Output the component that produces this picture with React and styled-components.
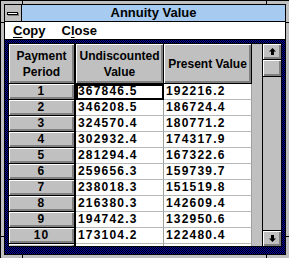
import React from 'react';
import styled, { createGlobalStyle } from 'styled-components';

const GlobalStyle = createGlobalStyle`
  html, body {
    margin: 0;
    padding: 0;
    background: #c0c0c0;
    overflow: hidden;
  }
  body {
    font-family: "Liberation Sans", Arial, sans-serif;
    color: #000;
  }
`;

// the 11th row is only a sliver at the bottom edge, so it stays empty
const rows = [
  [1, '367846.5', '192216.2'],
  [2, '346208.5', '186724.4'],
  [3, '324570.4', '180771.2'],
  [4, '302932.4', '174317.9'],
  [5, '281294.4', '167322.6'],
  [6, '259656.3', '159739.7'],
  [7, '238018.3', '151519.8'],
  [8, '216380.3', '142609.4'],
  [9, '194742.3', '132950.6'],
  [10, '173104.2', '122480.4'],
  ['', '', ''],
];

const raised = `
  box-shadow: inset 1px 1px #fff, inset -1px -1px #808080, inset -2px -2px #808080;
`;

const Window = styled.div`
  position: relative;
  width: 290px;
  height: 259px;
  box-sizing: border-box;
  border: 1px solid #000;
  background: #c0c0c0;
  padding: 3px;
`;

const Tick = styled.span`
  position: absolute;
  background: #000;
  ${p => (p.$v ? 'width: 1px; height: 4px;' : 'width: 4px; height: 1px;')}
`;

const Frame = styled.div`
  height: 100%;
  box-sizing: border-box;
  border: 1px solid #000;
  display: flex;
  flex-direction: column;
`;

const TitleBar = styled.div`
  display: flex;
  height: 16px;
  border-bottom: 1px solid #000;
  background: #a6caf0;
`;

const SysMenu = styled.div`
  width: 16px;
  border-right: 1px solid #000;
  background: #c0c0c0;
  display: flex;
  align-items: center;
  justify-content: center;
`;

const SysDash = styled.div`
  width: 11px;
  height: 3px;
  background: #fff;
  border: 1px solid #000;
  box-shadow: 1px 1px #808080;
  box-sizing: border-box;
  margin-left: -1px;
`;

const Title = styled.div`
  flex: 1;
  text-align: center;
  font-weight: bold;
  font-size: 13px;
  line-height: 16px;
`;

const MenuBar = styled.div`
  display: flex;
  height: 17px;
  border-bottom: 1px solid #000;
  background: #fff;
`;

const MenuItem = styled.div`
  padding: 0 8px;
  font-weight: bold;
  font-size: 13px;
  line-height: 17px;
  u {
    text-decoration-thickness: 1px;
    text-underline-offset: 2px;
  }
`;

const Client = styled.div`
  flex: 1;
  padding: 3px;
  background-color: #0000a8;
  background-image: conic-gradient(#000 25%, transparent 0 50%, #000 0 75%, transparent 0);
  background-size: 2px 2px;
`;

const GridBox = styled.div`
  display: flex;
  height: 204px;
  box-sizing: border-box;
  border: 1px solid #000;
  background: #c0c0c0;
  overflow: hidden;
`;

const Table = styled.div`
  flex: 1;
  display: grid;
  grid-template-columns: 67px 88px 88px;
  grid-template-rows: 40px;
  grid-auto-rows: 16px;
  align-content: start;
  overflow: hidden;
`;

const HeadCell = styled.div`
  box-sizing: border-box;
  border-right: ${p => (p.$corner ? 2 : 1)}px solid #000;
  border-bottom: 1px solid #000;
  background: #c0c0c0;
  ${raised}
  display: flex;
  align-items: center;
  justify-content: center;
  text-align: center;
  font-weight: bold;
  font-size: 12px;
  line-height: 16px;
`;

const RowHead = styled.div`
  box-sizing: border-box;
  border-right: 2px solid #000;
  border-bottom: 1px solid #000;
  background: #c0c0c0;
  ${raised}
  text-align: center;
  font-weight: bold;
  font-size: 12px;
  letter-spacing: 1.2px;
  line-height: 15px;
`;

const Cell = styled.div`
  box-sizing: border-box;
  border-right: 1px solid #a0a0a0;
  border-bottom: 1px solid #b8b8b8;
  background: #fff;
  padding-left: 2px;
  font-weight: bold;
  font-size: 12px;
  letter-spacing: 1.2px;
  line-height: 15px;
  white-space: nowrap;
  overflow: hidden;
  ${p => p.$focus && 'outline: 2px solid #000; outline-offset: -2px;'}
`;

const ScrollBar = styled.div`
  width: 18px;
  border-left: 1px solid #000;
  display: flex;
  flex-direction: column;
  background: #c0c0c0;
`;

const ScrollButton = styled.div`
  height: 16px;
  box-sizing: border-box;
  ${p => (p.$bottom ? 'border-top: 1px solid #000; margin-top: auto;' : 'border-bottom: 1px solid #000;')}
  background: #c0c0c0;
  ${raised}
  display: flex;
  align-items: center;
  justify-content: center;
`;

const Thumb = styled.div`
  height: 17px;
  box-sizing: border-box;
  border-bottom: 1px solid #000;
  background: #c0c0c0;
  ${raised}
`;

function Arrow({ down }) {
  return (
    <svg width="7" height="7" viewBox="0 0 7 7" style={{ transform: down ? 'rotate(180deg)' : undefined }}>
      <path d="M3.5 0 L7 3.5 L5 3.5 L5 7 L2 7 L2 3.5 L0 3.5 Z" fill="#000" />
    </svg>
  );
}

export default function App() {
  return (
    <>
      <GlobalStyle />
      <Window>
        <Tick $v style={{ left: 21, top: 0 }} />
        <Tick $v style={{ left: 265, top: 0 }} />
        <Tick $v style={{ left: 21, bottom: 0 }} />
        <Tick $v style={{ left: 265, bottom: 0 }} />
        <Tick style={{ left: 0, top: 21 }} />
        <Tick style={{ right: 0, top: 21 }} />
        <Tick style={{ left: 0, bottom: 21 }} />
        <Tick style={{ right: 0, bottom: 21 }} />
        <Frame>
          <TitleBar>
            <SysMenu><SysDash /></SysMenu>
            <Title>Annuity Value</Title>
          </TitleBar>
          <MenuBar>
            <MenuItem><u>C</u>opy</MenuItem>
            <MenuItem>C<u>l</u>ose</MenuItem>
          </MenuBar>
          <Client>
            <GridBox>
              <Table>
                <HeadCell $corner>Payment<br />Period</HeadCell>
                <HeadCell>Undiscounted<br />Value</HeadCell>
                <HeadCell>Present Value</HeadCell>
                {rows.map(([n, u, p], i) => (
                  <React.Fragment key={i}>
                    <RowHead>{n}</RowHead>
                    <Cell $focus={n === 1}>{u}</Cell>
                    <Cell>{p}</Cell>
                  </React.Fragment>
                ))}
              </Table>
              <ScrollBar>
                <ScrollButton><Arrow /></ScrollButton>
                <Thumb />
                <ScrollButton $bottom><Arrow down /></ScrollButton>
              </ScrollBar>
            </GridBox>
          </Client>
        </Frame>
      </Window>
    </>
  );
}
